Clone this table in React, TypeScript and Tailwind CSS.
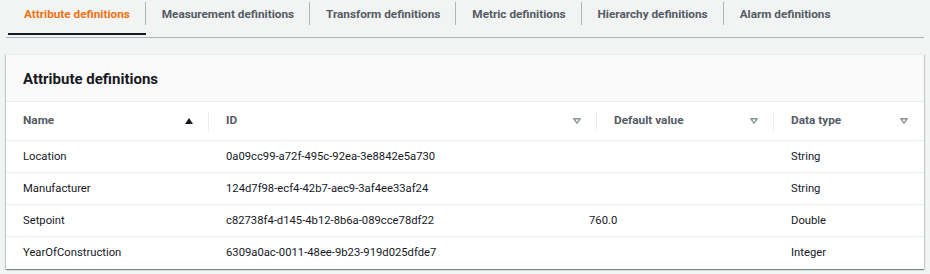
import React from "react";

type Row = { name: string; id: string; defaultValue?: string; dataType: string };

const tabs = [
  "Attribute definitions",
  "Measurement definitions",
  "Transform definitions",
  "Metric definitions",
  "Hierarchy definitions",
  "Alarm definitions",
];

const rows: Row[] = [
  { name: "Location", id: "0a09cc99-a72f-495c-92ea-3e8842e5a730", dataType: "String" },
  { name: "Manufacturer", id: "124d7f98-ecf4-42b7-aec9-3af4ee33af24", dataType: "String" },
  { name: "Setpoint", id: "c82738f4-d145-4b12-8b6a-089cce78df22", defaultValue: "760.0", dataType: "Double" },
  { name: "YearOfConstruction", id: "6309a0ac-0011-48ee-9b23-919d025dfde7", dataType: "Integer" },
];

const cols = "grid grid-cols-[203px_388px_177px_1fr]";

function SortedIcon() {
  return (
    <svg width="8" height="6" viewBox="0 0 8 6" className="shrink-0">
      <path d="M0 6 L4 0 L8 6 Z" fill="#16191f" />
    </svg>
  );
}

function UnsortedIcon() {
  return (
    <svg width="8" height="6" viewBox="0 0 8 6" className="shrink-0">
      <path d="M0.8 0.8 L7.2 0.8 L4 5.2 Z" fill="none" stroke="#879596" strokeWidth="1.4" strokeLinejoin="round" />
    </svg>
  );
}

function HeaderCell({ label, sorted, last }: { label: string; sorted?: boolean; last?: boolean }) {
  return (
    <div className="relative flex h-full items-center justify-between pl-[17px] pr-[16px]">
      <span className="text-[11.8px] font-bold text-[#545b64]">{label}</span>
      {sorted ? <SortedIcon /> : <UnsortedIcon />}
      {!last && <span className="absolute right-0 top-[10px] h-[19px] w-px bg-[#eaeded]" />}
    </div>
  );
}

export default function App() {
  return (
    <div
      className="min-h-screen bg-[#f2f3f3] px-[6px] text-[11.25px] text-[#16191f]"
      style={{ fontFamily: "Roboto, 'Liberation Sans', sans-serif" }}
    >
      {/* Tab strip */}
      <div className="flex h-[38px] border-b border-[#aab7b8] pl-[2px]">
        {tabs.map((tab, i) => (
          <div key={tab} className="relative flex h-[29px] items-center px-4">
            <span className={`text-[11.75px] font-bold ${i === 0 ? "text-[#ec7211]" : "text-[#545b64]"}`}>{tab}</span>
            {i < tabs.length - 1 && <span className="absolute right-0 top-[2px] h-[23px] w-px bg-[#aab7b8]" />}
            {i === 0 && <span className="absolute bottom-[-6px] left-0 right-0 h-[2px] bg-[#16191f]" />}
          </div>
        ))}
      </div>

      {/* Attribute table card */}
      <div className="mt-[16px] border-t border-[#eaeded] bg-white shadow-[0_1px_1px_0_rgba(0,28,36,0.3),1px_1px_1px_0_rgba(0,28,36,0.15),-1px_1px_1px_0_rgba(0,28,36,0.15)]">
        <div className="flex h-[47px] items-center border-b border-[#eaeded] bg-[#fafafa] px-[17px] pt-[2px]">
          <h2 className="text-[15px] font-bold text-[#16191f]">Attribute definitions</h2>
        </div>

        <div className={`${cols} h-[39px] border-b border-[#eaeded]`}>
          <HeaderCell label="Name" sorted />
          <HeaderCell label="ID" />
          <HeaderCell label="Default value" />
          <HeaderCell label="Data type" last />
        </div>

        {rows.map((row, i) => (
          <div
            key={row.id}
            className={`${cols} h-[32px] items-center pt-[1px] ${i < rows.length - 1 ? "border-b border-[#eaeded]" : ""}`}
          >
            <div className="pl-[17px]">{row.name}</div>
            <div className="pl-[17px]">{row.id}</div>
            <div className="ml-[-8px]">{row.defaultValue}</div>
            <div className="pl-[17px]">{row.dataType}</div>
          </div>
        ))}
      </div>
    </div>
  );
}
